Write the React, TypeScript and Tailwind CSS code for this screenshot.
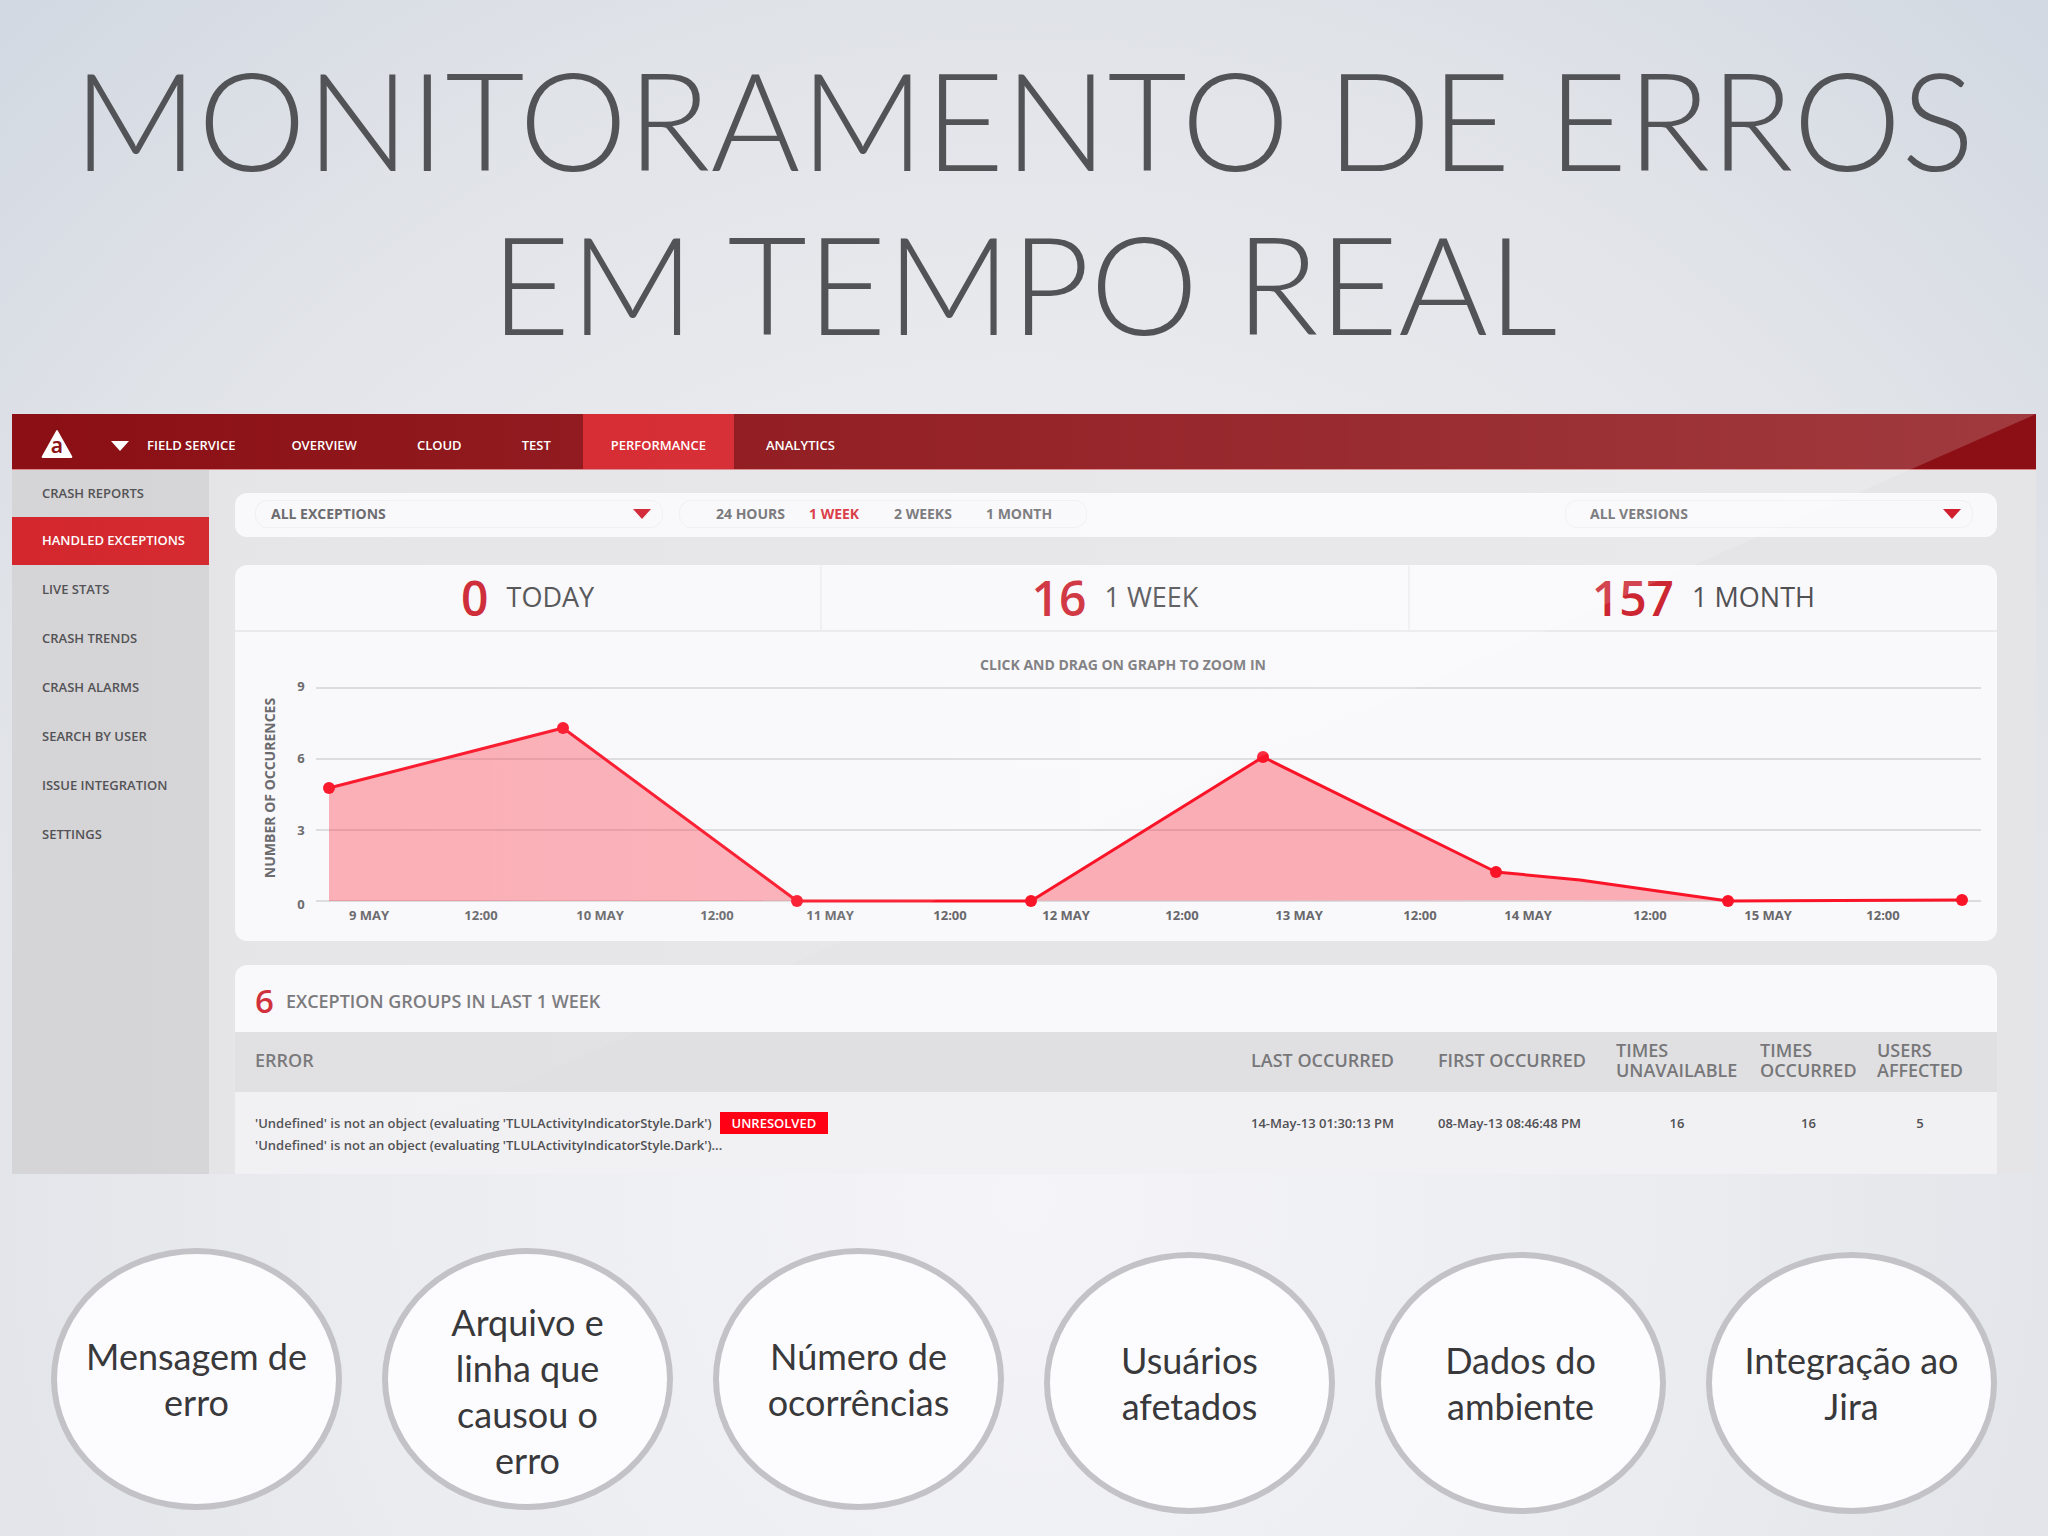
const navItems = ["OVERVIEW", "CLOUD", "TEST", "PERFORMANCE", "ANALYTICS"];

const sideItems = [
  "CRASH REPORTS",
  "HANDLED EXCEPTIONS",
  "LIVE STATS",
  "CRASH TRENDS",
  "CRASH ALARMS",
  "SEARCH BY USER",
  "ISSUE INTEGRATION",
  "SETTINGS",
];

const ranges = ["24 HOURS", "1 WEEK", "2 WEEKS", "1 MONTH"];

const stats = [
  { value: "0", label: "TODAY" },
  { value: "16", label: "1 WEEK" },
  { value: "157", label: "1 MONTH" },
];

const points: [number, number][] = [
  [94, 156],
  [328, 96],
  [562, 269],
  [796, 269],
  [1028, 125],
  [1261, 240],
  [1493, 269],
  [1727, 268],
];

const line = "94,156 328,96 562,269 796,269 1028,125 1261,240 1345,248 1493,269 1727,268";

const yTicks = [
  { label: "9", line: 56, text: 59 },
  { label: "6", line: 127, text: 131 },
  { label: "3", line: 198, text: 203 },
  { label: "0", line: 269, text: 277 },
];

const xTicks: [number, string][] = [
  [134, "9 MAY"],
  [246, "12:00"],
  [365, "10 MAY"],
  [482, "12:00"],
  [595, "11 MAY"],
  [715, "12:00"],
  [831, "12 MAY"],
  [947, "12:00"],
  [1064, "13 MAY"],
  [1185, "12:00"],
  [1293, "14 MAY"],
  [1415, "12:00"],
  [1533, "15 MAY"],
  [1648, "12:00"],
];

const bubbles: { lines: string[]; low: boolean }[] = [
  { lines: ["Mensagem de", "erro"], low: false },
  { lines: ["Arquivo e", "linha que", "causou o", "erro"], low: false },
  { lines: ["Número de", "ocorrências"], low: false },
  { lines: ["Usuários", "afetados"], low: true },
  { lines: ["Dados do", "ambiente"], low: true },
  { lines: ["Integração ao", "Jira"], low: true },
];

function Caret({ className }: { className: string }) {
  return (
    <svg viewBox="0 0 18 10" className={className} aria-hidden="true">
      <path d="M0 0h18L9 10z" fill="currentColor" />
    </svg>
  );
}

function Logo() {
  return (
    <svg viewBox="0 0 32 28" className="h-7 w-8" role="img" aria-label="Logo">
      <path d="M15 1Q16 -1 17 1L31 26Q32 28 30 28H2Q0 28 1 26Z" fill="#fff" />
      <text x="16" y="23" textAnchor="middle" fontSize="21" fontWeight="600" fill="#8c1418" fontFamily="Noto Sans, sans-serif">
        a
      </text>
    </svg>
  );
}

function FilterSelect({ label, option, pad }: { label: string; option: string; pad: string }) {
  return (
    <div className="relative h-7 w-[408px]">
      <select
        aria-label={label}
        className={`h-7 w-full appearance-none rounded-xl border border-[#f0eff2] bg-transparent text-sm leading-5 font-bold text-[#68686b] ${pad}`}
      >
        <option>{option}</option>
      </select>
      <Caret className="pointer-events-none absolute top-[9px] right-3 h-[10px] w-[18px] text-[#d02030]" />
    </div>
  );
}

function NavBar() {
  return (
    <nav className="flex h-14 items-stretch border-b border-[#d9888b] bg-[#8b0f14] text-[13px] font-semibold text-white">
      <a href="#home" className="ml-[29px] flex items-center pt-1" aria-label="Home">
        <Logo />
      </a>
      <button type="button" className="ml-[38px] flex items-center gap-[18px] pt-2 pr-7">
        <Caret className="h-[10px] w-[18px] text-white" />
        FIELD SERVICE
      </button>
      <div className="flex gap-1">
        {navItems.map((item) => (
          <a
            key={item}
            href={`#${item.toLowerCase()}`}
            className={`flex items-center px-7 pt-2 ${item === "PERFORMANCE" ? "bg-[#d5222a]" : ""}`}
          >
            {item}
          </a>
        ))}
      </div>
    </nav>
  );
}

function SideBar() {
  return (
    <aside className="flex w-[197px] shrink-0 flex-col bg-[#d5d4d6] text-[13px] font-semibold text-[#525255]">
      {sideItems.map((item, i) => (
        <a
          key={item}
          href={`#${item.toLowerCase().replace(/ /g, "-")}`}
          className={`flex items-center pl-[30px] ${i === 0 ? "h-[47px]" : i === 1 ? "h-12" : "h-[49px]"} ${
            i === 1 ? "bg-[#d3272d] text-white" : ""
          }`}
        >
          {item}
        </a>
      ))}
    </aside>
  );
}

function Chart() {
  return (
    <svg viewBox="0 0 1762 309" className="block h-auto w-full" fontFamily="Open Sans, sans-serif" fontWeight="700" fill="#68686b">
      <text x="888" y="38" textAnchor="middle" fontSize="14" fill="#757578">
        CLICK AND DRAG ON GRAPH TO ZOOM IN
      </text>
      <text transform="translate(40 156) rotate(-90)" textAnchor="middle" fontSize="14">
        NUMBER OF OCCURENCES
      </text>
      {yTicks.map((t) => (
        <g key={t.label}>
          <line x1="81" x2="1746" y1={t.line} y2={t.line} stroke="#dcdbde" strokeWidth="2" />
          <text x="66" y={t.text} textAnchor="middle" fontSize="13">
            {t.label}
          </text>
        </g>
      ))}
      <polygon points={`${line} 94,269`} fill="#ff2a3a" fillOpacity="0.36" />
      <polyline points={line} fill="none" stroke="#fa1428" strokeWidth="3" strokeLinejoin="round" />
      {points.map(([x, y]) => (
        <circle key={x} cx={x} cy={y} r="6" fill="#fa1428" />
      ))}
      {xTicks.map(([x, label]) => (
        <text key={x} x={x} y="288" textAnchor="middle" fontSize="13">
          {label}
        </text>
      ))}
    </svg>
  );
}

function ExceptionTable() {
  return (
    <section className="mt-6 overflow-hidden rounded-t-xl bg-[#f9f8fb]">
      <h2 className="flex h-[67px] items-center gap-3 pt-1 pl-5 text-lg font-semibold text-[#77777a]">
        <span className="text-[33px] leading-10 text-[#d02c38]">6</span>
        EXCEPTION GROUPS IN LAST 1 WEEK
      </h2>
      <table className="w-full table-fixed text-left">
        <colgroup>
          <col />
          <col className="w-[187px]" />
          <col className="w-[178px]" />
          <col className="w-[144px]" />
          <col className="w-[117px]" />
          <col className="w-[120px]" />
        </colgroup>
        <thead>
          <tr className="h-[60px] bg-[#e0e0e2] text-lg leading-5 text-[#77777a]">
            <th className="pb-1 pl-5 font-semibold">ERROR</th>
            <th className="pb-1 font-semibold">LAST OCCURRED</th>
            <th className="pb-1 font-semibold">FIRST OCCURRED</th>
            <th className="pb-1 font-semibold">TIMES<br />UNAVAILABLE</th>
            <th className="pb-1 font-semibold">TIMES<br />OCCURRED</th>
            <th className="pb-1 font-semibold">USERS<br />AFFECTED</th>
          </tr>
        </thead>
        <tbody>
          <tr className="h-[82px] bg-[#f1f0f3] align-top text-[13px] leading-[22px] font-semibold text-[#505053]">
            <td className="pt-5 pl-5">
              <div className="flex items-center gap-2">
                'Undefined' is not an object (evaluating 'TLULActivityIndicatorStyle.Dark')
                <span className="bg-[#ff0014] px-3 text-white">UNRESOLVED</span>
              </div>
              <div>'Undefined' is not an object (evaluating 'TLULActivityIndicatorStyle.Dark')...</div>
            </td>
            <td className="pt-5">14-May-13 01:30:13 PM</td>
            <td className="pt-5">08-May-13 08:46:48 PM</td>
            <td className="pt-5 pr-[22px] text-center">16</td>
            <td className="pt-5 pr-5 text-center">16</td>
            <td className="pt-5 pr-[34px] text-center">5</td>
          </tr>
        </tbody>
      </table>
    </section>
  );
}

function Dashboard() {
  return (
    <div className="relative mx-3 font-['Open_Sans',sans-serif]">
      <NavBar />
      <div className="flex">
        <SideBar />
        <main className="flex-1 bg-[#e5e4e7] pt-[23px] pr-[39px] pl-[26px]">
          <form className="flex h-11 items-center gap-4 rounded-xl bg-[#f9f8fb] pr-6 pb-0.5 pl-5">
            <FilterSelect label="Exceptions" option="ALL EXCEPTIONS" pad="pl-[15px]" />
            <div className="grid h-7 w-[408px] grid-cols-[93px_85px_92px_auto] items-center rounded-xl border border-[#f0eff2] pl-9 text-sm font-bold text-[#727275]">
              {ranges.map((r) => (
                <button key={r} type="button" className={r === "1 WEEK" ? "text-left text-[#d8303a]" : "text-left"}>
                  {r}
                </button>
              ))}
            </div>
            <div className="ml-auto">
              <FilterSelect label="Versions" option="ALL VERSIONS" pad="pl-6" />
            </div>
          </form>
          <section className="mt-7 rounded-xl bg-[#f9f8fb]">
            <div className="grid h-[67px] grid-cols-3 divide-x-2 divide-[#efeef1] border-b-2 border-[#eae9ec]">
              {stats.map((s) => (
                <div key={s.label} className="flex items-center justify-center gap-[18px]">
                  <span className="text-5xl font-semibold text-[#cc2632]">{s.value}</span>
                  <span className="text-[27px] text-[#515154]">{s.label}</span>
                </div>
              ))}
            </div>
            <Chart />
          </section>
          <ExceptionTable />
        </main>
      </div>
      <div className="pointer-events-none absolute inset-0 bg-linear-to-r from-white/0 to-white/18 [clip-path:polygon(0_0,100%_0,15%_100%,0_100%)]" />
    </div>
  );
}

export default function App() {
  return (
    <div className="min-h-screen w-full bg-[#f2f2f6] bg-[radial-gradient(ellipse_72%_100%_at_50%_78%,#f5f5f9_0%,#ebecf0_45%,#e0e3e8_78%,#d0d7e1_108%)] pb-5 font-[Lato,sans-serif]">
      <h1 className="pt-9 text-center text-[137px] leading-[164px] font-light text-[#515356]">
        MONITORAMENTO DE ERROS
        <br />
        EM TEMPO REAL
      </h1>
      <div className="mt-[50px]">
        <Dashboard />
      </div>
      <ul className="mx-[51px] mt-[74px] grid grid-cols-6 gap-10">
        {bubbles.map((b) => (
          <li
            key={b.lines[0]}
            className={`flex h-[262px] items-center justify-center rounded-[50%] border-[6px] border-[#c3c2c6] bg-[#fcfcfe] text-center text-4xl leading-[46px] text-[#39393b] ${
              b.low ? "mt-1" : ""
            } ${b.lines.length > 3 ? "pt-6" : ""}`}
          >
            <p>
              {b.lines.map((l) => (
                <span key={l} className="block whitespace-nowrap">
                  {l}
                </span>
              ))}
            </p>
          </li>
        ))}
      </ul>
    </div>
  );
}
